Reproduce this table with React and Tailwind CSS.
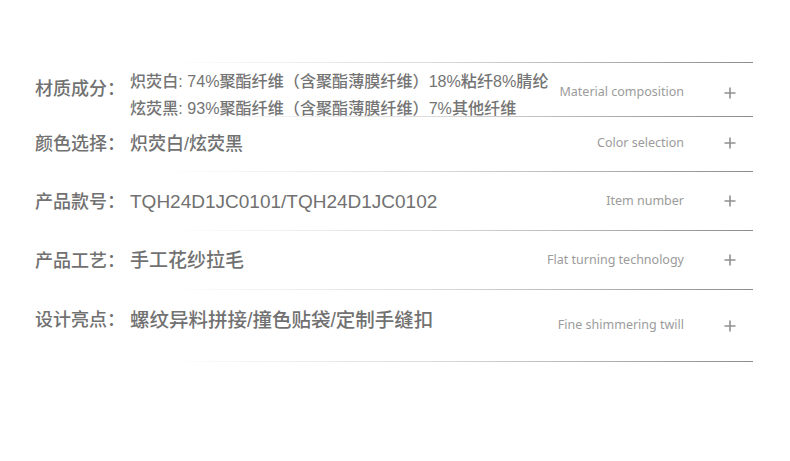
import React from "react";

const font = { fontFamily: '"Liberation Sans", "Noto Sans CJK SC", sans-serif' };
const enFont = { fontFamily: '"Noto Sans", "Liberation Sans", sans-serif' };

function Line() {
  return <div className="h-px w-full bg-linear-to-r from-transparent from-[18%] via-[#dcdcdc] via-[55%] to-[#8c8c8c]" />;
}

function Plus() {
  return (
    <svg width="12" height="12" viewBox="0 0 12 12" className="shrink-0">
      <path d="M6 0.5V11.5M0.5 6H11.5" stroke="#909090" strokeWidth="1.6" />
    </svg>
  );
}

function Row({ label, children, en, h, enOffset = "", valOffset = "", valSize = "text-[18px]" }) {
  return (
    <>
      <div className={`flex items-center ${h}`}>
        <div className={`w-[95px] shrink-0 text-[18px] font-medium text-[#717171] ${valOffset}`}>{label}</div>
        <div className={`flex-1 ${valSize} font-medium text-[#717171] ${valOffset}`}>{children}</div>
        <div className={`text-[12.5px] text-[#9b9b9b] ${enOffset}`} style={enFont}>{en}</div>
        <div className={`ml-[40px] mr-[17px] ${enOffset}`}>
          <Plus />
        </div>
      </div>
      <Line />
    </>
  );
}

export default function App() {
  return (
    <div className="w-[790px] h-[461px] bg-white overflow-hidden" style={font}>
      <div className="ml-[35px] w-[718px] pt-[62px]">
        <Line />
        <Row label="材质成分：" en="Material composition" h="h-[53px]" enOffset="mt-[6px]">
          <div className="mt-[10px] text-[16.1px] leading-[27px] text-[#747474]">
            <div className="whitespace-nowrap">炽荧白: 74%聚酯纤维（含聚酯薄膜纤维）18%粘纤8%腈纶</div>
            <div className="whitespace-nowrap">炫荧黑: 93%聚酯纤维（含聚酯薄膜纤维）7%其他纤维</div>
          </div>
        </Row>
        <Row label="颜色选择：" en="Color selection" h="h-[54px]" enOffset="-mt-[2px]">
          炽荧白/炫荧黑
        </Row>
        <Row label="产品款号：" en="Item number" h="h-[58px]" valOffset="mt-[2px]" valSize="text-[19px]">
          TQH24D1JC0101/TQH24D1JC0102
        </Row>
        <Row label="产品工艺：" en="Flat turning technology" h="h-[58px]" valOffset="mt-[2px]" valSize="text-[19px]">
          手工花纱拉毛
        </Row>
        <Row label="设计亮点：" en="Fine shimmering twill" h="h-[71px]" valOffset="-mt-[10px]" valSize="text-[19.5px]">
          螺纹异料拼接/撞色贴袋/定制手缝扣
        </Row>
      </div>
    </div>
  );
}
